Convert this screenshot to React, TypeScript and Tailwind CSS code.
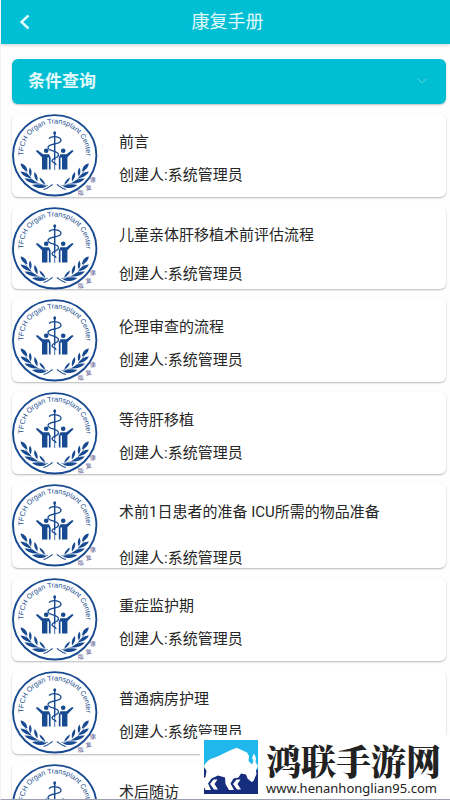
import { useId } from "react";

type Entry = { title: string; spacing: string; height: string };

const CREATOR = "创建人:系统管理员";

const entries: Entry[] = [
  { title: "前言", spacing: "gap-3", height: "h-[83px]" },
  { title: "儿童亲体肝移植术前评估流程", spacing: "gap-[18px]", height: "h-[82px]" },
  { title: "伦理审查的流程", spacing: "gap-3", height: "h-[83px]" },
  { title: "等待肝移植", spacing: "gap-3", height: "h-[82px]" },
  { title: "术前1日患者的准备 ICU所需的物品准备", spacing: "gap-[25px]", height: "h-[84px]" },
  { title: "重症监护期", spacing: "gap-3", height: "h-[83px]" },
  { title: "普通病房护理", spacing: "gap-3", height: "h-[83px]" },
  { title: "术后随访", spacing: "gap-3", height: "h-[83px]" },
];

function Person() {
  return (
    <g>
      <circle cx="34.2" cy="36.800" r="2.3" />
      <path d="M23.800 37 25.300 36 31 40.200 37 40.200 38.600 43.500 38.600 55.400 36.900 55.400 36.900 43.500 35.400 43.500 35.400 55.400 30 55.400 30 43.200Z" />
    </g>
  );
}

function Laurel() {
  return (
    <g>
      <path
        d="M12 53C15 63 23 71 36 71.500"
        fill="none"
        stroke="#174a91"
        strokeWidth="0.6"
      />
      <path d="M8.500 49.500C12.500 50 15 53 15.500 57.500 11.500 56 9 53.500 8.500 49.500Z" />
      <path d="M8.500 57.500C13 57.500 17 60.500 19.500 64.500 14.500 63.500 10.500 61.500 8.500 57.500Z" />
      <path d="M12.500 64.500C18 64 22.500 66 26 69.500 20.500 70 15.500 68.500 12.500 64.500Z" />
      <path d="M20 71C25 69.500 30 70 34.500 72.500 29 75 24 74.500 20 71Z" />
      <path d="M18 53.500C20 56.500 20 59 18.700 62.500 16.600 59.500 16.400 56.500 18 53.500Z" />
      <path d="M22.500 58C25.500 61 26 63.500 25.400 67.500 22.600 64.500 21.500 61.500 22.500 58Z" />
      <path d="M27.500 63.500C31 65.500 32.500 67.500 33.200 70.800 29.800 69 27.800 66.500 27.500 63.500Z" />
      <path
        d="M31.500 75.500C35 75 37 73 40.500 70.500"
        fill="none"
        stroke="#174a91"
        strokeWidth="1.100"
      />
    </g>
  );
}

function Emblem() {
  const arc = useId();
  return (
    <svg
      viewBox="0 0 87 83"
      className="h-[83px] w-[87px] shrink-0"
      fill="#174a91"
      role="img"
      aria-label="TFCH Organ Transplant Center"
    >
      <ellipse
        cx="42.700"
        cy="41.300"
        rx="41.700"
        ry="40.200"
        fill="#fff"
        stroke="#174a91"
        strokeWidth="1.900"
      />
      <path id={arc} d="M12 48A31.500 31.500 0 1 1 73.400 48" fill="none" />
      <text fontSize="7.200" className="font-['Liberation_Sans']" fill="#24508f">
        <textPath href={`#${arc}`} startOffset="50%" textAnchor="middle">
          TFCH Organ Transplant Center
        </textPath>
      </text>
      <Person />
      <g transform="translate(85.400 0) scale(-1 1)">
        <Person />
      </g>
      <path
        d="M42.700 17.500V46"
        fill="none"
        stroke="#174a91"
        strokeWidth="1.500"
      />
      <path d="M42.700 46V56" fill="none" stroke="#174a91" strokeWidth="0.800" />
      <circle cx="42.700" cy="19" r="1.500" />
      <path
        d="M37 24.500C40 21.500 49 22.500 49 26.500 49 31 36 29 36 33.500 36 37.500 46.500 36.500 46.500 41 46.500 44.500 39.800 43.500 40 47 40.300 49 44 48.500 44 51"
        fill="none"
        stroke="#174a91"
        strokeWidth="1.300"
      />
      <Laurel />
      <g transform="translate(85.400 0) scale(-1 1)">
        <Laurel />
      </g>
      <g
        fontSize="6"
        fill="#59588f"
        textAnchor="middle"
        className="font-['Noto_Sans_CJK_SC']"
      >
        <text transform="translate(81.500 68) rotate(-12)">康</text>
        <text transform="translate(77 76) rotate(-10)">复</text>
        <text transform="translate(69 81) rotate(-6)">版</text>
      </g>
    </svg>
  );
}

function BisonLogo() {
  return (
    <svg viewBox="0 0 54 54" className="size-[54px] shrink-0" aria-hidden="true">
      <path fill="#20b8ec" d="M0 0H54V54H0Z" />
      <path fill="#162c7c" d="M0 30H54V54H0Z" />
      <path
        fill="#fff"
        d="M0 26C2 22 5 19 11 17.500 18 15 25 10 32.700 7.700L43 12.500 45 16 44.500 21 48 24.500 49.500 21 48 18 50 13.500 52 18 51.500 22 54 26 52 30 52.500 34 49.500 41 47.500 42 43.500 38.500 42 34.500 37 33.500 34.500 37.500 29.500 38.500 26.500 43.500 30 50H25L21.500 44 21 37.500 14 35.500 7.500 38.500 4 43.500 7 50H1.500L0 47Z"
      />
      <path fill="#162c7c" d="M0 27 2.500 31 1.500 37 0 38Z" />
      <path
        fill="#fff"
        d="M32.500 39.500H36.500L33.500 44 37 49.500H33L29 44ZM9.500 39.500H13.500L10.500 44 14 49.500H10L6 44Z"
      />
    </svg>
  );
}

export default function App() {
  return (
    <div className="relative flex h-screen flex-col overflow-hidden border-b border-l border-b-gray-400 border-l-gray-100 bg-[#fefefe] font-['Roboto','Noto_Sans_CJK_SC',sans-serif] text-[#262626]">
      <header className="grid h-11 shrink-0 grid-cols-[48px_1fr_44px] items-center bg-[#00bed3] text-[#e2fafc] shadow-[0_1px_4px_rgba(0,0,0,0.2)]">
        <button type="button" aria-label="返回" className="flex h-full items-center pl-[18px]">
          <svg viewBox="0 0 12 16" className="h-4 w-3" fill="none" stroke="currentColor" strokeWidth="2.400">
            <path d="M9.500 1.500 2.500 8 9.500 14.500" />
          </svg>
        </button>
        <h1 className="text-center text-lg leading-6">康复手册</h1>
      </header>

      <main className="flex min-h-0 flex-1 flex-col gap-2.5 overflow-hidden pt-[15px] pr-1 pl-[11px]">
        <button
          type="button"
          aria-expanded="false"
          className="flex h-[45px] shrink-0 items-center justify-between rounded-md bg-[#00bed3] pr-[19px] pb-0.5 pl-4 text-[17px] leading-6 font-bold text-[#e2fafc] shadow-[0_1px_2px_rgba(0,0,0,0.25)]"
        >
          条件查询
          <svg viewBox="0 0 10 6" className="h-1.5 w-2.5" fill="none" stroke="#72d2d6" strokeWidth="1">
            <path d="M1 .8 5 4.800 9 .8" />
          </svg>
        </button>

        <ul className="flex flex-col gap-2.5">
          {entries.map((entry) => (
            <li
              key={entry.title}
              className={`flex shrink-0 gap-5 rounded-md bg-white shadow-[0_1px_2px_rgba(0,0,0,0.28)] ${entry.height}`}
            >
              <Emblem />
              <div className={`flex flex-col pt-[18px] text-[15px] leading-[21px] ${entry.spacing}`}>
                <h2>{entry.title}</h2>
                <p>{CREATOR}</p>
              </div>
            </li>
          ))}
        </ul>
      </main>

      <aside className="absolute right-0 -bottom-px flex h-[65px] w-[250px] items-start gap-2 bg-white pt-[5px] pl-1">
        <BisonLogo />
        <div className="flex flex-col whitespace-nowrap text-[#222]">
          <strong className="font-['Noto_Serif_CJK_SC','Noto_Sans_CJK_SC',serif] text-[35px] leading-10 font-black">
            鸿联手游网
          </strong>
          <span className="font-['Noto_Sans'] text-[13px] leading-4">www.henanhonglian95.com</span>
        </div>
      </aside>
    </div>
  );
}
